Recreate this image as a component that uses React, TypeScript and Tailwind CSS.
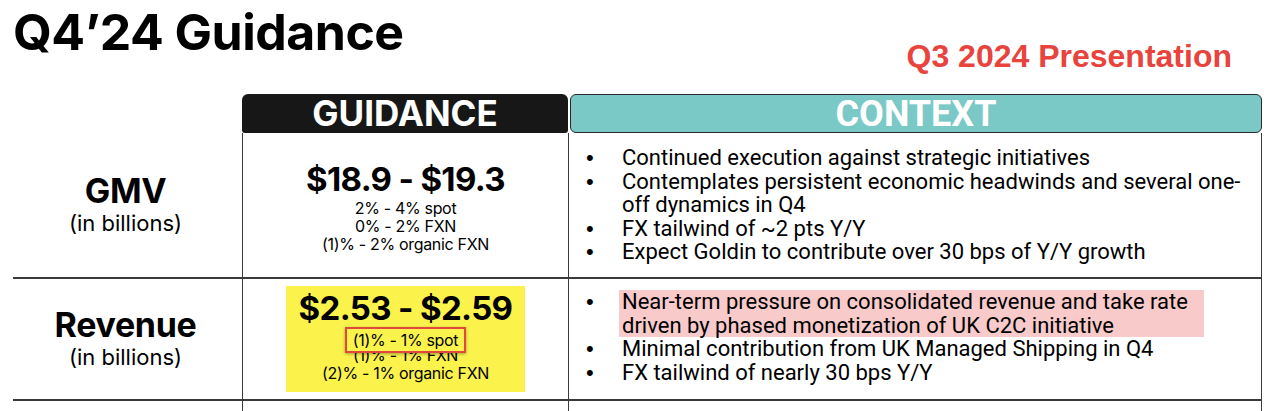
const gmvContext = [
  "Continued execution against strategic initiatives",
  "Contemplates persistent economic headwinds and several one-off dynamics in Q4",
  "FX tailwind of ~2 pts Y/Y",
  "Expect Goldin to contribute over 30 bps of Y/Y growth",
];

const revenueContext = [
  "Minimal contribution from UK Managed Shipping in Q4",
  "FX tailwind of nearly 30 bps Y/Y",
];

function Bullet({ children }: { children: React.ReactNode }) {
  return (
    <li className="flex">
      <span className="w-[53px] shrink-0 pl-[17px] font-['Liberation_Sans',sans-serif]">•</span>
      <span>{children}</span>
    </li>
  );
}

function MetricLabel({ name }: { name: string }) {
  return (
    <div className="flex flex-col items-center justify-center pr-[4px] text-black">
      <span className="text-[34px] font-bold leading-[36px] tracking-[-0.01em]">{name}</span>
      <span className="text-[22px] leading-[28px]">(in billions)</span>
    </div>
  );
}

export default function App() {
  return (
    <div className="h-[411px] w-[1273px] overflow-hidden bg-white font-['Inter',sans-serif] text-black">
      <div className="flex items-start justify-between">
        <h1 className="ml-[13px] mt-[2px] text-[50px] font-bold leading-[60px] tracking-[-0.01em]">
          Q4’24 Guidance
        </h1>
        <p className="mr-[41px] mt-[38px] font-['Liberation_Sans',Arial,sans-serif] text-[32px] font-bold leading-[36px] text-[#e8433d]">
          Q3 2024 Presentation
        </p>
      </div>

      <div className="ml-[13px] mt-[20px] grid w-[1249px] grid-cols-[229px_326px_694px]">
        {/* header row */}
        <div />
        <div className="flex h-[39px] items-center justify-center rounded-t-[6px] rounded-b-[3px] bg-[#171717] text-[35px] font-bold text-white">
          GUIDANCE
        </div>
        <div className="ml-[2px] flex h-[39px] items-center justify-center rounded-[6px] border-[1.5px] border-[#2a2a2a] bg-[#7ac9c7] font-['Roboto',sans-serif] text-[36px] font-bold text-white">
          CONTEXT
        </div>

        {/* GMV row */}
        <div className="flex h-[146px] items-center justify-center border-b-2 border-[#3a3a3a]">
          <MetricLabel name="GMV" />
        </div>
        <div className="flex flex-col items-center justify-center border-b-2 border-l-[1.5px] border-[#3a3a3a] pt-[2px]">
          <span className="text-[33px] font-bold leading-[40px] tracking-[-0.02em]">$18.9 - $19.3</span>
          <span className="text-[16px] leading-[18px] tracking-[-0.02em]">2% - 4% spot</span>
          <span className="text-[16px] leading-[18px] tracking-[-0.02em]">0% - 2% FXN</span>
          <span className="text-[16px] leading-[18px] tracking-[-0.02em]">(1)% - 2% organic FXN</span>
        </div>
        <div className="border-x-[1.5px] border-b-2 border-[#3a3a3a] pt-[13px]">
          <ul className="font-['Roboto',sans-serif] text-[22px] leading-[23.5px]">
            {gmvContext.map((t) => (
              <Bullet key={t}>
                <span className="block w-[622px]">{t}</span>
              </Bullet>
            ))}
          </ul>
        </div>

        {/* Revenue row */}
        <div className="flex h-[122px] items-center justify-center border-b-2 border-[#3a3a3a]">
          <MetricLabel name="Revenue" />
        </div>
        <div className="flex items-center justify-center border-b-2 border-l-[1.5px] border-[#3a3a3a]">
          <div className="flex h-[106px] w-[239px] flex-col items-center bg-[#fbf34c] pt-[3px]">
            <span className="text-[33px] font-bold leading-[38px] tracking-[-0.02em]">$2.53 - $2.59</span>
            <span className="relative z-10 mb-[-7px] border-2 border-[#e2483e] bg-[#fbf34c] px-[6px] text-[16px] leading-[22px] tracking-[-0.02em] shadow-[0_1px_3px_rgba(0,0,0,0.35)]">
              (1)% - 1% spot
            </span>
            <span className="text-[16px] leading-[18px] tracking-[-0.02em]">(1)% - 1% FXN</span>
            <span className="text-[16px] leading-[18px] tracking-[-0.02em]">(2)% - 1% organic FXN</span>
          </div>
        </div>
        <div className="border-x-[1.5px] border-b-2 border-[#3a3a3a] pt-[11px]">
          <ul className="font-['Roboto',sans-serif] text-[22px] leading-[23.5px]">
            <Bullet>
              <span className="ml-[-3px] block w-[585px] bg-[#f9caca] pl-[3px]">
                Near-term pressure on consolidated revenue and take rate driven by phased monetization of UK C2C initiative
              </span>
            </Bullet>
            {revenueContext.map((t) => (
              <Bullet key={t}>{t}</Bullet>
            ))}
          </ul>
        </div>

        {/* next row (cut off) */}
        <div className="h-[20px]" />
        <div className="border-l-[1.5px] border-[#3a3a3a]" />
        <div className="border-x-[1.5px] border-[#3a3a3a]" />
      </div>
    </div>
  );
}
